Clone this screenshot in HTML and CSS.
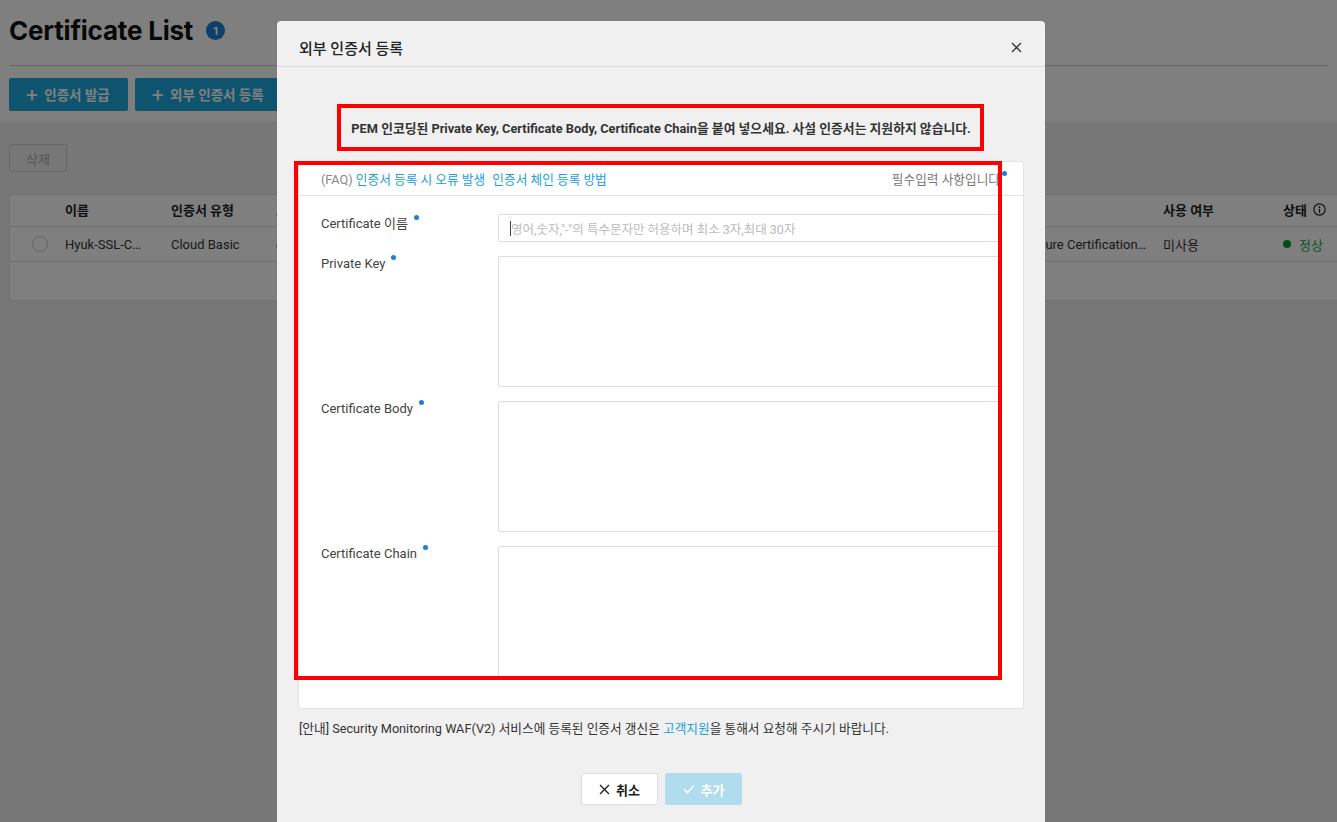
FILE: index.html
```html
<!DOCTYPE html>
<html lang="ko">
<head>
    <meta charset="UTF-8">
    <meta name="viewport" content="width=device-width, initial-scale=1.0">
    <title>Certificate List</title>
    <link rel="stylesheet" href="styles.css">
</head>
<body>
    <div class="page">
        <div class="page-head">
            <h1 class="page-title">Certificate List <span class="count-badge">1</span></h1>
            <div class="page-actions">
                <button class="btn-primary"><span class="plus">+</span> 인증서 발급</button>
                <button class="btn-primary"><span class="plus">+</span> 외부 인증서 등록</button>
            </div>
        </div>
        <div class="page-body">
            <button class="btn-delete">삭제</button>
            <div class="table-card">
                <div class="table-row table-head">
                    <div></div>
                    <div>이름</div>
                    <div>인증서 유형</div>
                    <div>도메인</div>
                    <div></div>
                    <div>사용 여부</div>
                    <div class="status-head">상태
                        <svg width="13" height="13" viewBox="0 0 13 13">
                            <circle cx="6.5" cy="6.5" r="5.6" stroke="#222" stroke-width="1.2" fill="none"/>
                            <circle cx="6.5" cy="4" r="0.9" fill="#222"/>
                            <path d="M6.5 5.8 V9.8" stroke="#222" stroke-width="1.3"/>
                        </svg>
                    </div>
                </div>
                <div class="table-row">
                    <div><span class="radio"></span></div>
                    <div class="ellipsis">Hyuk-SSL-Cert-test</div>
                    <div>Cloud Basic</div>
                    <div>cert.example.com</div>
                    <div class="ellipsis">Secure Certification Authority</div>
                    <div>미사용</div>
                    <div class="status-ok"><span class="ok-dot"></span>정상</div>
                </div>
            </div>
        </div>
    </div>

    <div class="overlay"></div>

    <div class="modal-wrap">
        <div class="modal">
            <div class="modal-header">
                <span class="modal-title">외부 인증서 등록</span>
                <svg class="modal-close" width="11" height="11" viewBox="0 0 11 11">
                    <path d="M1 1 L10 10 M10 1 L1 10" stroke="#333" stroke-width="1.3" fill="none"/>
                </svg>
            </div>
            <div class="modal-body">
                <p class="notice">PEM 인코딩된 Private Key, Certificate Body, Certificate Chain을 붙여 넣으세요. 사설 인증서는 지원하지 않습니다.</p>

                <div class="form-card">
                    <div class="faq-row">
                        <div>
                            <span class="faq-label">(FAQ)</span>
                            <a class="link">인증서 등록 시 오류 발생</a>
                            <a class="link">인증서 체인 등록 방법</a>
                        </div>
                        <div class="required-note">필수입력 사항입니다<span class="req-dot"></span></div>
                    </div>
                    <div class="form-scroll">
                        <div class="form-row">
                            <label class="form-label">Certificate 이름<span class="req-dot"></span></label>
                            <div class="fake-input"><span class="caret"></span>영어,숫자,"-"의 특수문자만 허용하며 최소 3자,최대 30자</div>
                        </div>
                        <div class="form-row">
                            <label class="form-label">Private Key<span class="req-dot"></span></label>
                            <div class="fake-area"></div>
                        </div>
                        <div class="form-row">
                            <label class="form-label">Certificate Body<span class="req-dot"></span></label>
                            <div class="fake-area"></div>
                        </div>
                        <div class="form-row">
                            <label class="form-label">Certificate Chain<span class="req-dot"></span></label>
                            <div class="fake-area"></div>
                        </div>
                    </div>
                </div>

                <p class="guide">[안내] Security Monitoring WAF(V2) 서비스에 등록된 인증서 갱신은 <a class="guide-link">고객지원</a>을 통해서 요청해 주시기 바랍니다.</p>

                <div class="modal-actions">
                    <button class="btn-cancel">
                        <svg width="11" height="11" viewBox="0 0 11 11"><path d="M1 1 L10 10 M10 1 L1 10" stroke="#222" stroke-width="1.4" fill="none"/></svg>
                        취소
                    </button>
                    <button class="btn-add">
                        <svg width="12" height="10" viewBox="0 0 12 10"><path d="M1 5 L4.5 8.5 L11 1.5" stroke="#fff" stroke-width="1.6" fill="none"/></svg>
                        추가
                    </button>
                </div>
            </div>
        </div>
    </div>

    <!-- annotation boxes -->
    <div class="mark mark-notice"></div>
    <div class="mark mark-form"></div>
</body>
</html>
```

FILE: styles.css
```css
body {
    margin: 0;
    height: 822px;
    overflow: hidden;
    font-family: Roboto, "Noto Sans CJK KR", sans-serif;
    color: #333;
    background: #eee;
    position: relative;
}

button {
    font-family: inherit;
    border: none;
    cursor: pointer;
}

/* Background page */
.page-head {
    background: #fff;
    padding: 0 9px 11px;
}

.page-title {
    margin: 0;
    height: 66px;
    display: flex;
    align-items: center;
    font-family: Inter, "Noto Sans CJK KR", sans-serif;
    font-size: 26px;
    font-weight: 700;
    letter-spacing: -0.2px;
    color: #111;
    border-bottom: 1px solid #ccc;
    box-sizing: border-box;
    padding-bottom: 4px;
}

.count-badge {
    display: inline-flex;
    justify-content: center;
    align-items: center;
    width: 19px;
    height: 19px;
    margin-left: 13px;
    border-radius: 50%;
    background: #1a7fd6;
    color: #fff;
    font-size: 11px;
    font-weight: 700;
    letter-spacing: 0;
}

.page-actions {
    display: flex;
    gap: 7px;
    padding-top: 12px;
}

.btn-primary {
    height: 33px;
    padding: 0 18px 0 17px;
    background: #1ca9dc;
    color: #fff;
    font-size: 13.5px;
    font-weight: 700;
    border-radius: 2px;
}

.plus {
    font-size: 21px;
    font-weight: 400;
    vertical-align: -2px;
    margin-right: 3px;
}

.page-body {
    padding: 22px 0 0 9px;
}

.btn-delete {
    width: 58px;
    height: 28px;
    background: #eee;
    border: 1px solid #ccc;
    color: #aaa;
    font-size: 13px;
    border-radius: 2px;
}

.table-card {
    margin-top: 22px;
    background: #fff;
    border: 1px solid #e2e2e2;
    border-right: none;
    height: 105px;
}

.table-row {
    display: grid;
    grid-template-columns: 55px 106px 105px 748px 139px 120px 1fr;
    height: 34px;
    align-items: center;
    font-size: 13px;
    border-bottom: 1px solid #ddd;
}

.table-head {
    height: 32px;
    padding-bottom: 3px;
    box-sizing: border-box;
    font-weight: 700;
    color: #222;
}

.table-row > div {
    white-space: nowrap;
    overflow: hidden;
    padding-right: 14px;
}

.table-row > div:nth-child(2) {
    padding-right: 26px;
}

.table-row > div:last-child {
    padding-right: 0;
}

.ellipsis {
    text-overflow: ellipsis;
}

.radio {
    display: block;
    width: 14px;
    height: 14px;
    margin-left: 22px;
    border: 1px solid #ccc;
    border-radius: 50%;
    background: #fff;
}

.status-head {
    display: flex;
    align-items: center;
    gap: 6px;
}

.status-ok {
    color: #1aa84b;
    display: flex;
    align-items: center;
}

.ok-dot {
    width: 8px;
    height: 8px;
    border-radius: 50%;
    background: #0a9a30;
    margin-right: 8px;
    flex-shrink: 0;
}

.overlay {
    position: fixed;
    inset: 0;
    background: rgba(0, 0, 0, 0.5);
}

/* Modal */
.modal-wrap {
    position: fixed;
    inset: 21px 0 0 0;
    display: flex;
    justify-content: center;
    padding-right: 15px;
}

.modal {
    width: 768px;
    background: #f0f0f0;
    border-radius: 4px 4px 0 0;
    height: 820px;
}

.modal-header {
    height: 46px;
    box-sizing: border-box;
    display: flex;
    justify-content: space-between;
    align-items: center;
    padding: 8px 22px 0;
    border-bottom: 1px solid #dcdcdc;
}

.modal-title {
    font-size: 15px;
    font-weight: 500;
    color: #222;
}

.modal-close {
    margin-right: 1px;
}

.modal-body {
    padding: 0 21px;
}

.notice {
    margin: 52px 0 0;
    line-height: 20px;
    text-align: center;
    font-size: 12.8px;
    font-weight: 700;
    color: #333;
}

.form-card {
    margin-top: 22px;
    background: #fff;
    border: 1px solid #e3e3e3;
    border-radius: 3px;
    padding-bottom: 32px;
}

.faq-row {
    height: 33px;
    display: flex;
    justify-content: space-between;
    align-items: center;
    padding: 0 16px 0 22px;
    border-bottom: 1px solid #e3e3e3;
    font-size: 12.7px;
}

.faq-label {
    color: #888;
}

.link {
    color: #1aa0e0;
    margin-right: 4px;
}

.guide-link {
    color: #1aa0e0;
}

.required-note {
    color: #777;
}

.req-dot {
    display: inline-block;
    width: 5px;
    height: 5px;
    border-radius: 50%;
    background: #1c7fd8;
    vertical-align: 8px;
    margin-left: 6px;
}

.required-note .req-dot {
    margin-left: 2px;
}

.form-scroll {
    height: 480px;
    overflow: hidden;
    padding: 18px 0 0 22px;
    box-sizing: border-box;
    display: flex;
    flex-direction: column;
    gap: 14px;
}

.form-row {
    display: flex;
    flex-shrink: 0;
}

.form-label {
    width: 177px;
    flex-shrink: 0;
    font-size: 13px;
    color: #444;
    margin-top: -1px;
}

.fake-input {
    width: 502px;
    height: 28px;
    box-sizing: border-box;
    border: 1px solid #ddd;
    border-radius: 2px;
    display: flex;
    align-items: center;
    padding-left: 11px;
    font-size: 12.5px;
    color: #bbb;
    white-space: nowrap;
}

.caret {
    width: 1px;
    height: 15px;
    background: #444;
}

.fake-area {
    width: 502px;
    height: 131px;
    box-sizing: border-box;
    border: 1px solid #ddd;
    border-radius: 2px;
}

.guide {
    margin: 11px 0 0 1px;
    font-size: 12.7px;
    line-height: 18px;
    color: #333;
}

.modal-actions {
    margin-top: 35px;
    display: flex;
    justify-content: center;
    gap: 7px;
    padding-left: 1px;
}

.btn-cancel,
.btn-add {
    width: 77px;
    height: 32px;
    display: flex;
    justify-content: center;
    align-items: center;
    gap: 6px;
    font-size: 13px;
    font-weight: 700;
    border-radius: 2px;
}

.btn-cancel {
    background: #fff;
    border: 1px solid #ddd;
    color: #222;
}

.btn-add {
    background: #b0dcee;
    color: #fff;
}

/* annotation boxes drawn over the screenshot */
.mark {
    position: absolute;
    border: 4px solid #ff0000;
    box-sizing: border-box;
}

.mark-notice {
    left: 337px;
    top: 104px;
    width: 647px;
    height: 47px;
}

.mark-form {
    left: 294px;
    top: 161px;
    width: 708px;
    height: 519px;
}
```
